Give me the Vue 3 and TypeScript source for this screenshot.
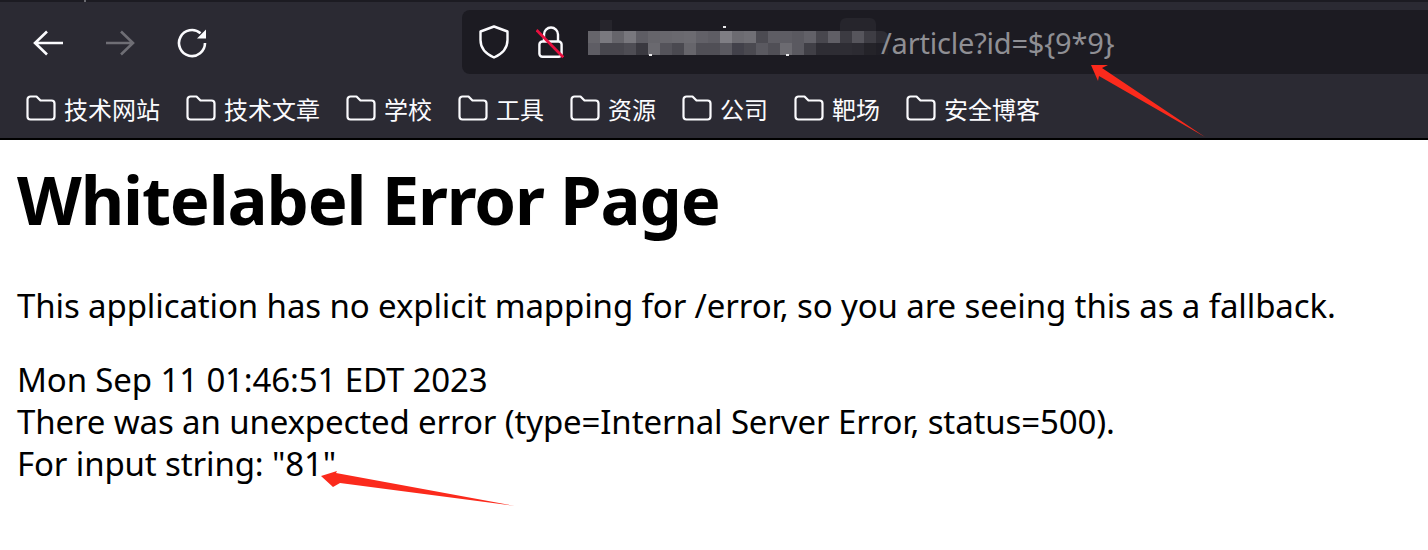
<script setup lang="ts">
const bookmarks: string[] = ['技术网站', '技术文章', '学校', '工具', '资源', '公司', '靶场', '安全博客']

const mosaicTop: string[] = ['#66656b', '#7a797f', '#66656b', '#78777d', '#5e5d64', '#66656b', '#68676d', '#6a696f', '#6c6b71', '#626168', '#5e5d64', '#7f7e84', '#6c6b71', '#706f75', '#4c4b52', '#5e5d64', '#5e5d64', '#5a5960', '#626168', '#48474e', '#605f66', '#3c3b42', '#56555c', '#3e3d44', '#2e2d34']
const mosaicBottom: string[] = ['#5e5d64', '#48474e', '#48474e', '#4e4d54', '#3a3940', '#6a696f', '#54535a', '#4a4950', '#66656b', '#504f56', '#504f56', '#5a5960', '#42414a', '#4a4950', '#5a5960', '#504f56', '#6c6b71', '#5a5960', '#403f46', '#2e2d34', '#2e2d34', '#2e2d34', '#2c2b32', '#242329', '#201f26']
</script>

<template>
  <div class="page">
    <header class="chrome">
      <div class="strip"><i class="tick"></i></div>
      <div class="toolbar">
        <nav class="nav">
          <svg class="nav-icon" viewBox="0 0 30 26" fill="none" stroke="#fbfbfe" stroke-width="2.6">
            <path d="M14 1.5 2 13l12 11.5M2 13h28" />
          </svg>
          <svg class="nav-icon" viewBox="0 0 30 26" fill="none" stroke="#6f6e75" stroke-width="2.6">
            <path d="M16 1.5 28 13 16 24.5M28 13H1" />
          </svg>
          <svg class="nav-icon reload" viewBox="0 0 30 30" fill="none">
            <path d="M23.5 5.2A13 13 0 1 0 28 15" stroke="#fbfbfe" stroke-width="2.6" />
            <path d="M29 1.5v9h-9z" fill="#fbfbfe" />
          </svg>
        </nav>
        <div class="urlbar">
          <svg class="shield" viewBox="0 0 30 34" fill="none" stroke="#fbfbfe" stroke-width="2.4" stroke-linejoin="round">
            <path d="M15 1.5 28.5 6.5V15C28.5 23 23 29 15 32.5 7 29 1.5 23 1.5 15V6.5z" />
          </svg>
          <svg class="lock" viewBox="0 0 28 34" fill="none">
            <path d="M8 16V9.5a7 7 0 0 1 14 0V16" stroke="#fbfbfe" stroke-width="2.4" />
            <rect x="3.4" y="16.5" width="22.2" height="15.2" rx="3" stroke="#fbfbfe" stroke-width="2.4" />
            <path d="M.5 5 27.3 32.3" stroke="#e8103f" stroke-width="2.8" />
          </svg>
          <div class="mosaic" aria-hidden="true">
            <i class="shade shade-a"></i>
            <i class="shade shade-b"></i>
            <i class="speck speck-a"></i>
            <i class="speck speck-b"></i>
            <i class="speck speck-c"></i>
            <div class="mosaic-row">
              <i v-for="(c, i) in mosaicTop" :key="i" :style="{ background: c }"></i>
            </div>
            <div class="mosaic-row">
              <i v-for="(c, i) in mosaicBottom" :key="i" :style="{ background: c }"></i>
            </div>
          </div>
          <span class="url">/article?id=${9*9}</span>
        </div>
      </div>
      <div class="bookmarks">
        <div v-for="b in bookmarks" :key="b" class="bookmark">
          <svg class="folder" viewBox="0 0 30 26" fill="none" stroke="#fbfbfe" stroke-width="2.2" stroke-linejoin="round">
            <path d="M4.5 1.5H10.5L14.5 5.5H25.5A3 3 0 0 1 28.5 8.5V21.5A3 3 0 0 1 25.5 24.5H4.5A3 3 0 0 1 1.5 21.5V4.5A3 3 0 0 1 4.5 1.5Z" />
          </svg>
          <span>{{ b }}</span>
        </div>
      </div>
    </header>

    <main class="content">
      <h1>Whitelabel Error Page</h1>
      <p class="lead">This application has no explicit mapping for /error, so you are seeing this as a fallback.</p>
      <div class="details">
        <div>Mon Sep 11 01:46:51 EDT 2023</div>
        <div>There was an unexpected error (type=Internal Server Error, status=500).</div>
        <div>For input string: "81"</div>
      </div>
    </main>

    <svg class="annotations" viewBox="0 0 1428 550" aria-hidden="true">
      <path d="M1091 65 1108 65 1102 68 1205 137 1099 76 1098 81Z" fill="#fb2a1c" />
      <path d="M321 476 337 471 336 473 515 506 340 483 333 487Z" fill="#fb2a1c" />
    </svg>
  </div>
</template>

<style>
html, body { margin: 0; background: #fff; }
</style>

<style scoped>
.page {
  position: relative;
  width: 1428px;
  height: 550px;
  overflow: hidden;
  font-family: "Noto Sans", "Noto Sans CJK SC", sans-serif;
  color: #000;
}
.chrome {
  background: #2b2a33;
  border-bottom: 2px solid #000;
  height: 138px;
}
.strip { height: 2px; background: #1c1b22; display: flex; }
.tick { width: 2px; margin-left: 84px; background: #6a6a70; }
.toolbar { display: flex; align-items: center; height: 72px; padding-top: 8px; box-sizing: border-box; }
.nav { display: flex; align-items: center; gap: 42px; padding: 2px 0 0 33px; width: 462px; box-sizing: border-box; flex: none; }
.nav-icon { width: 30px; height: 26px; flex: none; }
.reload { height: 30px; }
.urlbar {
  flex: 1;
  height: 64px;
  background: #1c1b22;
  border-radius: 8px 0 0 8px;
  display: flex;
  align-items: center;
  padding-left: 17px;
}
.shield { width: 30px; height: 34px; flex: none; }
.lock { width: 28px; height: 34px; margin-left: 27px; flex: none; }
.mosaic { position: relative; margin-left: 24px; width: 296px; display: flex; flex-direction: column; flex: none; padding-top: 2px; overflow: visible; }
.mosaic-row { display: flex; height: 12px; }
.mosaic-row i { width: 12px; display: block; flex: none; }
.mosaic-row:first-of-type i:last-child { border-radius: 0 6px 0 0; }
.shade { position: absolute; background: #26252c; }
.shade-a { left: 12px; top: -9px; width: 12px; height: 11px; }
.shade-b { left: 252px; top: -11px; width: 36px; height: 13px; border-radius: 6px 6px 0 0; }
.speck { position: absolute; width: 3px; height: 2px; background: #e8e8ea; }
.speck-a { left: 135px; top: -3px; }
.speck-b { left: 61px; top: 25px; }
.speck-c { left: 198px; top: 25px; }
.url {
  position: relative;
  color: #8f8f94;
  font-size: 29px;
  letter-spacing: -0.2px;
  margin-left: -3px;
}
.bookmarks {
  display: flex;
  align-items: center;
  gap: 26px;
  padding: 12px 0 0 26px;
  height: 56px;
  box-sizing: border-box;
  color: #fbfbfe;
  font-size: 24px;
}
.bookmark { display: flex; align-items: center; gap: 8px; }
.folder { width: 30px; height: 26px; flex: none; }
.content { padding: 0 17px; }
h1 { font-size: 67px; line-height: 85px; font-weight: 700; margin: 17px 0 0; letter-spacing: -1.15px; }
.lead { font-size: 33px; line-height: 42px; margin: 43px 0 32px; letter-spacing: -0.11px; }
.details { font-size: 33px; line-height: 42px; letter-spacing: -0.13px; }
.annotations { position: absolute; inset: 0; width: 1428px; height: 550px; pointer-events: none; }
</style>
